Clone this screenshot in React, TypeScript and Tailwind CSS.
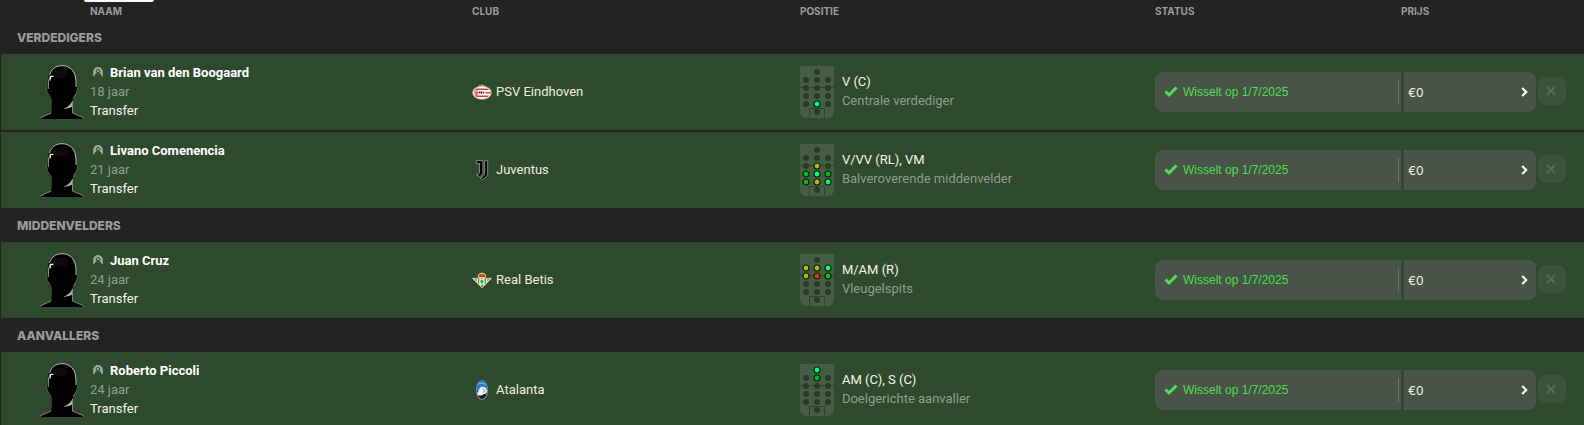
import type { ReactNode } from 'react';

type Rating = 'natural' | 'good' | 'fair' | 'poor';

interface Player {
  name: string;
  age: number;
  club: string;
  crest: ReactNode;
  positions: string;
  role: string;
  spots: Record<string, Rating>;
}

const ratingFill: Record<Rating, string> = {
  natural: '#00ff7b',
  good: '#00be18',
  fair: '#b1bb00',
  poor: '#d93a0b',
};

function PsvCrest() {
  return (
    <svg width="20" height="16" viewBox="0 0 20 16" aria-hidden="true">
      <path d="M7.2 3 6.8.8l1.6.8L10 0l1.6 1.6 1.6-.8-.4 2.2z" fill="#a9a98a" />
      <ellipse cx="10" cy="8.8" rx="9.8" ry="7" fill="#c9bd8f" />
      <ellipse cx="10" cy="8.8" rx="8.7" ry="6" fill="#fff" />
      <path d="M4.6 4.6h10.8l1.6 1.5H3zM13.5 8h5.1v1.6h-5.1zM3 11.4h14l-1.6 1.5H4.6z" fill="#e3393c" />
      <path d="M2.3 6.5h3.4v5H3z" fill="#e3393c" />
      <path d="M3.2 7.7h2M3.2 9.9h2" stroke="#fff" strokeWidth=".7" />
      <path d="M6.4 7h6.4l-.8 3H6z" fill="#fff" />
      <path d="M7 9.6V7.8h1.2v.9H7.4M10.3 7.8H9.2v.8h.8v.8H8.8M11 7.8l.5 1.5.8-1.5" stroke="#222" strokeWidth=".9" fill="none" />
    </svg>
  );
}

function JuventusCrest() {
  return (
    <svg width="20" height="20" viewBox="0 0 20 20" aria-hidden="true">
      <g fill="#000" stroke="#8f938f" strokeWidth=".9">
        <path d="M4.3.6h6.6v12.2c0 1.600-1.400 3-3.400 4L4.600 14.900c2-.7 2.900-1.300 2.900-2.600V3.500H4.300z" />
        <path d="M12.700.6h3v12.500c0 3.100-2.400 5-5.700 6.500l-1.800-1.300c2.800-1.300 4.500-2.700 4.500-5.200z" />
      </g>
    </svg>
  );
}

function BetisCrest() {
  return (
    <svg width="20" height="16" viewBox="0 0 20 16" aria-hidden="true">
      <path d="M.3 6.200h19.400L10 15.900z" fill="#f4ecd0" stroke="#d7c48a" strokeWidth=".6" />
      <path d="M3.200 6.800h1.400v2.600L3.200 8zM6 6.800h1.400v5.400L6 10.800zM9.200 6.800h1.600v8.200l-.8.500-.8-.7zM12.600 6.800H14v4l-1.400 1.400zM15.400 6.800h1.400V8l-1.400 1.400z" fill="#299d45" />
      <ellipse cx="10" cy="9.500" rx="2.800" ry="3.100" fill="#dff0db" />
      <ellipse cx="10" cy="9.500" rx="1.600" ry="2.100" fill="#39a877" />
      <path d="M6.400 5.900 5.800 3.400C6.200 1.700 8 1 10 .4c2 .6 3.800 1.300 4.200 3l-.6 2.500z" fill="#e5c983" />
      <path d="M7 4.900 6.700 3.500C7.500 2.500 8.500 2.400 10 2.300c1.500.1 2.500.2 3.300 1.200L13 4.900z" fill="#c63b22" />
    </svg>
  );
}

function AtalantaCrest() {
  return (
    <svg width="20" height="20" viewBox="0 0 20 20" aria-hidden="true">
      <ellipse cx="10" cy="10" rx="6" ry="9.800" fill="#9aa3a8" />
      <ellipse cx="10" cy="10" rx="5.200" ry="9" fill="#17181a" />
      <path d="M4.800 11C4.500 5.500 6.600 1 10 1s5.300 4 5.200 8L9 13z" fill="#1f7fd0" />
      <path d="M6.300 4.300C8 2.600 11.800 2.700 13.500 5" stroke="#8cc8f3" strokeWidth="1" fill="none" />
      <path d="M5.200 12.800c1.500-1 1.600-3.600 3.100-5.200 2-1.600 4.600-1 5.700.7l1 2.200c0 2.600-1.200 4-3.200 3.400-2 1.900-4.600 2-6.100 1z" fill="#f1f1f3" />
      <path d="M10.500 8.800c1.400.2 2.100 1.200 2 2.700l-1.800 1" stroke="#8d8790" strokeWidth="1" fill="none" />
    </svg>
  );
}

const groups: { title: string; players: Player[] }[] = [
  {
    title: 'Verdedigers',
    players: [
      {
        name: 'Brian van den Boogaard',
        age: 18,
        club: 'PSV Eindhoven',
        crest: <PsvCrest />,
        positions: 'V (C)',
        role: 'Centrale verdediger',
        spots: { '1-4': 'natural' },
      },
      {
        name: 'Livano Comenencia',
        age: 21,
        club: 'Juventus',
        crest: <JuventusCrest />,
        positions: 'V/VV (RL), VM',
        role: 'Balveroverende middenvelder',
        spots: {
          '1-2': 'fair',
          '0-3': 'good',
          '1-3': 'natural',
          '2-3': 'good',
          '0-4': 'good',
          '1-4': 'fair',
          '2-4': 'natural',
        },
      },
    ],
  },
  {
    title: 'Middenvelders',
    players: [
      {
        name: 'Juan Cruz',
        age: 24,
        club: 'Real Betis',
        crest: <BetisCrest />,
        positions: 'M/AM (R)',
        role: 'Vleugelspits',
        spots: {
          '0-1': 'fair',
          '1-1': 'fair',
          '2-1': 'natural',
          '0-2': 'fair',
          '1-2': 'poor',
          '2-2': 'good',
        },
      },
    ],
  },
  {
    title: 'Aanvallers',
    players: [
      {
        name: 'Roberto Piccoli',
        age: 24,
        club: 'Atalanta',
        crest: <AtalantaCrest />,
        positions: 'AM (C), S (C)',
        role: 'Doelgerichte aanvaller',
        spots: { '1-0': 'natural', '1-1': 'good' },
      },
    ],
  },
];

function Silhouette() {
  return (
    <svg className="shrink-0" width="46" height="54" viewBox="0 0 46 54" aria-hidden="true">
      <path
        d="M0 54c4-3 8-4 12.500-6l.5-13-2-5c-2 1-3.500-2-3.700-5-.2-2 .3-3.500 1.500-3.300C8 9 12 .4 22.500.4S38 9 37.500 22c1.500-.4 1.500 1.200 1.200 3.300-.4 3-1.600 5.400-3.200 5L33.500 37v11c4 2 8.500 3 12.500 6z"
        fill="#000"
      />
      <path d="M10.500 10C12.500 3.500 17 .7 23 .7S34 4 36 10l1 6v6" fill="none" stroke="#b9c0b8" strokeWidth="1" />
      <path d="M14 11.500h-3.200L9.500 16l-.2 8" fill="none" stroke="#8d958c" strokeWidth="1" />
      <path d="M14.500 11.300h-2.800L11 15.500" fill="none" stroke="#e8ebe8" strokeWidth="1.200" />
      <path d="M7.500 22.500c0 3 .8 6 2.300 7.500M38.500 22.500c0 3-.8 6-2.300 7.500l-2 4" fill="none" stroke="#6f786f" strokeWidth=".9" />
      <path d="M33.500 34.500c-.8 4-4 7.500-9.500 9.300 3.500 0 6-.6 9-2z" fill="#a9aea8" />
      <path d="M33.500 36v12M.5 53.800c3.500-2.800 8-4 11.500-5.500M45.500 53.800c-3.500-2.800-8.500-4-12-5.800" fill="none" stroke="#9aa19a" strokeWidth=".8" />
      <ellipse cx="22" cy="9" rx="7.500" ry="4.500" fill="#0b0b0b" />
    </svg>
  );
}

function PersonIcon() {
  return (
    <svg width="10" height="10" viewBox="0 0 10 10" aria-hidden="true">
      <path
        fillRule="evenodd"
        d="M5 .1a4.900 4.900 0 0 1 4.900 4.900v3.700L8.700 9.700C8.600 8 7.900 7 6.600 6.500L6.200 6a2.100 2.100 0 1 0-2.400 0l-.4.5C2.100 7 1.400 8 1.300 9.700L.1 8.700V5A4.900 4.900 0 0 1 5 .1zM5 2.900a1.200 1.200 0 1 1 0 2.400 1.200 1.200 0 0 1 0-2.400z"
        fill="#9aa898"
      />
    </svg>
  );
}

function Pitch({ spots }: { spots: Record<string, Rating> }) {
  const cells: [number, number][] = [[1, 0]];
  for (let row = 1; row <= 4; row++) for (let col = 0; col < 3; col++) cells.push([col, row]);
  cells.push([1, 5]);
  return (
    <svg className="shrink-0" width="34" height="52" viewBox="0 0 34 52" aria-hidden="true">
      <path d="M0 0h34v46a6 6 0 0 1-6 6H6a6 6 0 0 1-6-6z" fill="#455d45" />
      <path d="M0 21.500h34M9.500 52v-9.500h15V52" fill="none" stroke="#2d452d" />
      {cells.map(([col, row]) => {
        const rating = spots[`${col}-${row}`];
        const cx = 6 + col * 11;
        const cy = 6 + row * 8;
        return rating ? (
          <circle key={`${col}-${row}`} cx={cx} cy={cy} r="3" fill={ratingFill[rating]} stroke="#0b200f" strokeWidth="1.200" />
        ) : (
          <circle key={`${col}-${row}`} cx={cx} cy={cy} r="3" fill="#2a382a" />
        );
      })}
    </svg>
  );
}

function PlayerRow({ player, first }: { player: Player; first: boolean }) {
  const edge = first ? '' : 'border-t-2';
  return (
    <tr className="bg-[#2d4a2d]">
      <td className={`border-l border-[#232324] p-0 ${edge}`}>
        <div className="flex h-[76px] items-center gap-[5px] pl-[38px]">
          <Silhouette />
          <div className="pb-0.5 leading-[19px]">
            <div className="flex items-center gap-[7px] pl-[3px]">
              <PersonIcon />
              <span className="truncate font-bold text-white">{player.name}</span>
            </div>
            <div className="text-[#8f9f8e]">{player.age} jaar</div>
            <div className="text-[#f6f5ea]">Transfer</div>
          </div>
        </div>
      </td>
      <td className={`border-[#232324] p-0 ${edge}`}>
        <div className="flex items-center gap-1 leading-[19px] text-[#f0efdf]">
          {player.crest}
          <span className="truncate pb-0.5">{player.club}</span>
        </div>
      </td>
      <td className={`border-[#232324] p-0 ${edge}`}>
        <div className="flex items-center gap-2 leading-[19px]">
          <Pitch spots={player.spots} />
          <div className="min-w-0 pb-0.5">
            <div className="text-[#f6f5ea]">{player.positions}</div>
            <div className="truncate text-[#8f9f8e]">{player.role}</div>
          </div>
        </div>
      </td>
      <td className={`border-[#232324] p-0 ${edge}`}>
        <div className="mr-[3px] flex h-10 items-center rounded-l-lg bg-[#475447] pr-0.5 pl-[9px] font-['Liberation_Sans',sans-serif] text-[12px] text-[#4fdc4f]">
          <svg className="mr-[5px] shrink-0" width="14" height="12" viewBox="0 0 14 12" aria-hidden="true">
            <path d="M1.500 5.500 5 9 12.500 1.500" fill="none" stroke="#4fe04f" strokeWidth="3" />
          </svg>
          <span className="grow truncate">Wisselt op 1/7/2025</span>
          <span className="h-6 w-px bg-[#6a756a]" />
        </div>
      </td>
      <td className={`border-[#232324] p-0 ${edge}`}>
        <button
          type="button"
          className="mr-0.5 flex h-10 w-[132px] items-center justify-between rounded-r-lg bg-[#475447] pr-2 pl-1 font-['Inter',sans-serif] text-[12px] text-[#f6f5ea]"
        >
          <span className="pt-0.5">€0</span>
          <svg width="7" height="10" viewBox="0 0 7 10" aria-hidden="true">
            <path d="M1.200 1 5.200 5l-4 4" fill="none" stroke="#fffdf0" strokeWidth="2.200" />
          </svg>
        </button>
      </td>
      <td className={`border-[#232324] p-0 pb-0.5 ${edge}`}>
        <button
          type="button"
          aria-label="Verwijderen"
          className="flex size-7 items-center justify-center rounded-lg bg-[#39543a] pr-0.5"
        >
          <svg width="10" height="10" viewBox="0 0 10 10" aria-hidden="true">
            <path d="m1 1 8 8M9 1 1 9" stroke="#5b6a56" strokeWidth="1.800" />
          </svg>
        </button>
      </td>
    </tr>
  );
}

export default function App() {
  return (
    <main className="h-screen overflow-hidden bg-[#232324] font-['Roboto',sans-serif] text-[13px]">
      <table className="w-full table-fixed border-separate border-spacing-0 text-left">
        <colgroup>
          <col className="w-[29.8%]" />
          <col className="w-[20.7%]" />
          <col />
          <col className="w-[249px]" />
          <col className="w-[134px]" />
          <col className="w-[46px]" />
        </colgroup>
        <thead className="font-['Inter',sans-serif] text-[10px] leading-3 text-[#9c9c9c] uppercase">
          <tr className="h-5">
            <th className="relative p-0 pt-0.5 pl-[90px]">
              <span className="absolute top-0 left-[84px] h-0.5 w-[70px] rounded-b-sm bg-[#fbfaf2]" />
              Naam
            </th>
            <th className="p-0 pt-0.5">Club</th>
            <th className="p-0 pt-0.5">Positie</th>
            <th className="p-0 pt-0.5">Status</th>
            <th className="p-0 pt-0.5">
              <span className="-ml-[3px]">Prijs</span>
            </th>
            <th className="p-0" />
          </tr>
        </thead>
        {groups.map((group) => (
          <tbody key={group.title}>
            <tr className="h-[34px]">
              <th
                colSpan={6}
                scope="rowgroup"
                className="p-0 pt-0.5 pl-[17px] font-['Inter',sans-serif] text-[12px] leading-4 font-extrabold text-[#9c9c9c] uppercase"
              >
                {group.title}
              </th>
            </tr>
            {group.players.map((player, index) => (
              <PlayerRow key={player.name} player={player} first={index === 0} />
            ))}
          </tbody>
        ))}
      </table>
    </main>
  );
}
